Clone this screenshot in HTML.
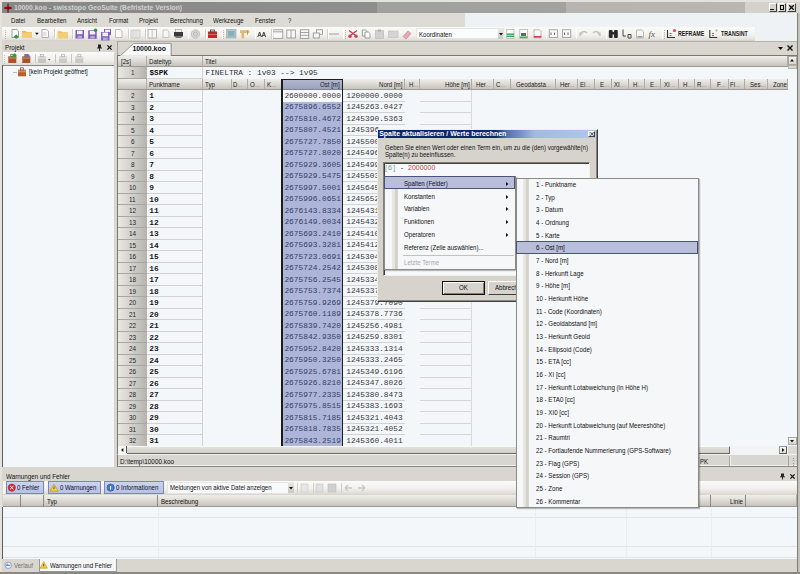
<!DOCTYPE html><html><head><meta charset="utf-8"><style>
html,body{margin:0;padding:0;}
body{width:800px;height:574px;position:relative;overflow:hidden;background:#d9d6d0;font-family:"Liberation Sans",sans-serif;}
div{position:absolute;box-sizing:border-box;}
svg{display:block;overflow:visible;}
.t{white-space:nowrap;line-height:0;transform-origin:0 0;}
.hdr{background:linear-gradient(#efeee9,#dedcd6 45%,#c6c4bd);border-right:1px solid #aeaca6;border-bottom:1px solid #9c9a93;}
.rh{background:linear-gradient(to right,#e9e7e2,#d6d4ce 40%,#c2c0ba 78%,#b4b2ac);border-bottom:1px solid #a8a6a0;}
</style></head><body>

<div style="left:0px;top:0px;width:800px;height:2px;background:#e4e2dd;"></div>
<div style="left:0px;top:0px;width:2px;height:574px;background:#e4e2dd;"></div>
<div style="left:2px;top:2px;width:795px;height:10.6px;background:linear-gradient(to right,#878787 0,#8e8e8e 375px,#a0a09e 375px,#a2a2a0 564px,#b5b4b1 564px,#b7b6b3 743px,#d4d2cc 743px);"></div>
<div style="left:2.5px;top:2.6px;width:10px;height:10px;"><svg width="10" height="10" viewBox="0 0 10 10"><path d="M0.6 5L5 2.6L9.4 5L5 7.4z" fill="#c84848"/><path d="M5 0.6V9.8" stroke="#5a0000" stroke-width="1"/><path d="M1.5 5H8.5" stroke="#7a0000" stroke-width="1.6"/></svg></div>
<div class="t" style="left:14px;top:7.5px;font-size:6.8px;color:#d2d2d2;font-weight:bold;">10000.koo - swisstopo GeoSuite (Befristete Version)</div>
<div style="left:768.5px;top:3.2px;width:8.6px;height:8.7px;background:#d8d5ce;border-top:1px solid #fff;border-left:1px solid #fff;border-right:1px solid #404040;border-bottom:1px solid #404040;"></div>
<div style="left:777.5px;top:3.2px;width:8.6px;height:8.7px;background:#d8d5ce;border-top:1px solid #fff;border-left:1px solid #fff;border-right:1px solid #404040;border-bottom:1px solid #404040;"></div>
<div style="left:787px;top:3.2px;width:8.6px;height:8.7px;background:#d8d5ce;border-top:1px solid #fff;border-left:1px solid #fff;border-right:1px solid #404040;border-bottom:1px solid #404040;"></div>
<div style="left:770.3px;top:8.6px;width:4.2px;height:1.4px;background:#111;"></div>
<div style="left:779.6px;top:5.2px;width:4.4px;height:4.4px;border:1px solid #111;border-top-width:1.6px;"></div>
<div style="left:789px;top:5px;width:5px;height:5px;"><svg width="5" height="5" viewBox="0 0 5 5"><path d="M0.3 0.3L4.7 4.7M4.7 0.3L0.3 4.7" stroke="#111" stroke-width="1.3"/></svg></div>
<div style="left:2px;top:12.6px;width:463px;height:14.0px;background:#dddbd5;"></div>
<div style="left:465px;top:12.6px;width:332px;height:28.0px;background:#eef2f5;"></div>
<div class="t" style="left:11.2px;top:21px;font-size:6.9px;color:#111;transform:scaleX(0.884);">Datei</div>
<div class="t" style="left:36.8px;top:21px;font-size:6.9px;color:#111;transform:scaleX(0.884);">Bearbeiten</div>
<div class="t" style="left:77.3px;top:21px;font-size:6.9px;color:#111;transform:scaleX(0.884);">Ansicht</div>
<div class="t" style="left:108.6px;top:21px;font-size:6.9px;color:#111;transform:scaleX(0.884);">Format</div>
<div class="t" style="left:139px;top:21px;font-size:6.9px;color:#111;transform:scaleX(0.884);">Projekt</div>
<div class="t" style="left:169.5px;top:21px;font-size:6.9px;color:#111;transform:scaleX(0.884);">Berechnung</div>
<div class="t" style="left:213.3px;top:21px;font-size:6.9px;color:#111;transform:scaleX(0.884);">Werkzeuge</div>
<div class="t" style="left:255px;top:21px;font-size:6.9px;color:#111;transform:scaleX(0.884);">Fenster</div>
<div class="t" style="left:287.5px;top:21px;font-size:6.9px;color:#111;transform:scaleX(0.884);">?</div>
<div style="left:2px;top:26.6px;width:752.6px;height:14.0px;background:linear-gradient(#fafaf8,#f3f2ee 55%,#e2e0d9 90%,#cfcdc6);"></div>
<div style="left:5.2px;top:29.5px;width:1.0px;height:1.0px;background:#b4b2ae;"></div>
<div style="left:5.2px;top:31.5px;width:1.0px;height:1.0px;background:#b4b2ae;"></div>
<div style="left:5.2px;top:33.5px;width:1.0px;height:1.0px;background:#b4b2ae;"></div>
<div style="left:5.2px;top:35.5px;width:1.0px;height:1.0px;background:#b4b2ae;"></div>
<div style="left:5.2px;top:37.5px;width:1.0px;height:1.0px;background:#b4b2ae;"></div>
<div style="left:0px;top:0px;width:800px;height:45px;"><svg width="800" height="45" viewBox="0 0 800 45"><path d="M12.0 29.5H16.8L18.5 31.2V37.5H12.0Z" fill="#fbfbfb" stroke="#8a8a8a" stroke-width="0.8"/><path d="M16.2 34.5l2.6 2.3-2.6 2.3-2.6-2.3z" fill="#2e9a3e"/><path d="M22.2 31H25.7L26.7 32H31.7V38H22.2Z" fill="#e9b95a"/><rect x="22.2" y="32.5" width="9.5" height="5.5" fill="#f3cd78"/><path d="M35 32.8h3.8l-1.9 2.2z" fill="#111"/><path d="M42.0 29.5H46.8L48.5 31.2V37.5H42.0Z" fill="#fcfcfc" stroke="#9a9aa8" stroke-width="0.8"/><path d="M43 33h3.6M43 35h3.6" stroke="#a0a0b0" stroke-width="0.6"/><path d="M57.8 31.2H61.3L62.3 32.2H67.8V38.2H57.8Z" fill="#e9b95a"/><rect x="57.8" y="32.7" width="10" height="5.5" fill="#f3cd78"/><rect x="75.5" y="30" width="8.5" height="8.5" fill="#7c5cb8"/><rect x="77.0" y="30.6" width="5.5" height="3.6" fill="#f4f0fa"/><rect x="77.5" y="35.6" width="4.5" height="2.6" fill="#b8a8d8"/><rect x="88.2" y="30.3" width="8.5" height="8.5" fill="#7c5cb8"/><rect x="89.7" y="30.900000000000002" width="5.5" height="3.6" fill="#f4f0fa"/><rect x="90.2" y="35.9" width="4.5" height="2.6" fill="#b8a8d8"/><circle cx="95.5" cy="30.2" r="1.8" fill="#2e9a3e"/><rect x="104" y="29" width="7" height="6" fill="#7c5cb8"/><rect x="105" y="29.6" width="5" height="2.4" fill="#f4f0fa"/><rect x="101" y="32" width="8.5" height="8.5" fill="#8466c0"/><rect x="102.5" y="32.6" width="5.5" height="3.6" fill="#f4f0fa"/><rect x="103" y="37.6" width="4.5" height="2.6" fill="#b8a8d8"/><path d="M115.5 29.5H120.3L122.0 31.2V37.5H115.5Z" fill="#fbfbfb" stroke="#b0b0b0" stroke-width="0.8"/><rect x="131" y="30" width="9" height="8" fill="#e6e6e6" stroke="#c0c0c0" stroke-width="0.7"/><path d="M133 30v8M136 30v8" stroke="#cfcfcf" stroke-width="0.6"/><rect x="148" y="29.5" width="8.5" height="8.5" fill="#f6f6f6" stroke="#a8a8a8" stroke-width="0.8"/><path d="M152.2 29.5v8.5" stroke="#b0b0b0" stroke-width="0.7"/><path d="M163.0 30.0H167.3L169.0 31.7V37.5H163.0Z" fill="#f6f6f6" stroke="#b8b8b8" stroke-width="0.8"/><rect x="175.5" y="29.3" width="6" height="3" fill="#f0f0f0" stroke="#888" stroke-width="0.5"/><rect x="174" y="32" width="9" height="4.5" fill="#3a3a3a"/><rect x="175.5" y="36" width="6" height="2" fill="#777"/><circle cx="195.5" cy="34" r="4.2" fill="#d8d8d8" stroke="#b8b8b8" stroke-width="0.8"/><circle cx="195.5" cy="34" r="2" fill="none" stroke="#aaa" stroke-width="0.8"/><rect x="208" y="31.5" width="9" height="6.5" fill="#c8242a"/><rect x="210.5" y="30" width="4" height="2" fill="none" stroke="#444" stroke-width="0.8"/><path d="M208 34.5h9" stroke="#f08080" stroke-width="0.7"/><rect x="226.5" y="29.5" width="9.5" height="8.5" fill="#b0c4cc" stroke="#98a8b0" stroke-width="0.6"/><rect x="228" y="31" width="6.5" height="5.5" fill="#8ab0b8"/><path d="M240 30.2h9.3v2.8h-5.2v5.3h-2.6v-5.3h-1.5z" fill="#e2b870"/><path d="M247.5 30.2v4.5" stroke="#c89848" stroke-width="1"/><path d="M257.8 37l1.8-5 1.8 5M258.5 35.3h2.2M262 37l1.8-5 1.8 5M262.7 35.3h2.2" stroke="#333" stroke-width="0.9" fill="none"/><rect x="272.8" y="29.8" width="10" height="8.5" fill="#f8f8f8" stroke="#909090" stroke-width="0.8"/><path d="M272.8 31.8h10" stroke="#909090" stroke-width="0.8"/><rect x="286.8" y="30" width="8.5" height="8" fill="#f8f8f8" stroke="#8c8c8c" stroke-width="0.8"/><path d="M291 30v8" stroke="#8c8c8c" stroke-width="0.8"/><rect x="300.3" y="29.8" width="8.5" height="8.5" fill="#f8f8f8" stroke="#8c8c8c" stroke-width="0.8"/><path d="M300.3 32.5h8.5M300.3 35.3h8.5" stroke="#8c8c8c" stroke-width="0.8"/><rect x="316.5" y="29.8" width="6" height="4.5" fill="#f8f8f8" stroke="#8c8c8c" stroke-width="0.8"/><rect x="313.3" y="33" width="6" height="5" fill="#f8f8f8" stroke="#8c8c8c" stroke-width="0.8"/><rect x="329" y="33" width="10" height="2" fill="#c8c8c8"/><path d="M349 30.5l8 6M357 30.5l-8 6" stroke="#c04050" stroke-width="1.3"/><circle cx="350" cy="36.3" r="1.8" fill="#d04858"/><circle cx="356" cy="36.3" r="1.8" fill="#d04858"/><path d="M362.3 30.0H365.6L367.3 31.7V36.0H362.3Z" fill="#fafafa" stroke="#8a8a8a" stroke-width="0.8"/><path d="M365.0 32.0H368.3L370.0 33.7V38.0H365.0Z" fill="#fafafa" stroke="#8a8a8a" stroke-width="0.8"/><rect x="375.5" y="30.5" width="8" height="8" fill="#d0d0d0" stroke="#b4b4b4" stroke-width="0.6"/><rect x="378" y="29.5" width="3" height="2" fill="#b0b0b0"/><rect x="388.5" y="31" width="9.5" height="6.5" fill="#d4d4d4" stroke="#bcbcbc" stroke-width="0.6"/><path d="M403 36.5l5-5.5 3 2.5-5 5.5z" fill="#e8a8b8" stroke="#c87890" stroke-width="0.6"/><rect x="506.8" y="29.3" width="7.2" height="9" fill="#fafafa" stroke="#a0a0a0" stroke-width="0.6"/><rect x="506.8" y="33.5" width="7.2" height="1.4" fill="#34a050"/><rect x="506.8" y="35.6" width="7.2" height="1.4" fill="#34a050"/><rect x="519.8" y="29.3" width="7.6" height="9" fill="#fafafa" stroke="#a0a0a0" stroke-width="0.6"/><rect x="521" y="33" width="5" height="3" fill="#507060"/><rect x="519.8" y="36.5" width="7.6" height="1.4" fill="#34a050"/><path d="M534.0 29.8H539.3L541.0 31.5V37.8H534.0Z" fill="#fafafa" stroke="#b0a0a0" stroke-width="0.8"/><rect x="533.8" y="36" width="7.5" height="1.6" fill="#d04050"/><rect x="549.2" y="29.8" width="8.2" height="7.5" fill="#fafafa" stroke="#888" stroke-width="0.7"/><path d="M551 32.5v2.5M554.5 32.5v2.5" stroke="#555" stroke-width="0.9"/><rect x="562.6" y="29.8" width="8.2" height="7.5" fill="#fafafa" stroke="#888" stroke-width="0.7"/><path d="M564.5 32.5v2.5M568 32.5v2.5" stroke="#555" stroke-width="0.9"/><path d="M580 36a4 4 0 0 1 7-3" stroke="#c4c4c4" stroke-width="1.6" fill="none"/><path d="M579 32.5l1.5 3 2.5-2z" fill="#c4c4c4"/><path d="M600 36a4 4 0 0 0 -7-3" stroke="#c4c4c4" stroke-width="1.6" fill="none"/><path d="M601 32.5l-1.5 3-2.5-2z" fill="#c4c4c4"/><rect x="608.8" y="30" width="3.8" height="8" rx="1" fill="#2a2a2a"/><rect x="614" y="30" width="3.8" height="8" rx="1" fill="#2a2a2a"/><rect x="611.5" y="32" width="3.5" height="2.5" fill="#2a2a2a"/><path d="M623 29.5v6.5h3M628 34.5h3v3.5h-3z" stroke="#333" stroke-width="0.9" fill="none"/><path d="M636.5 30.0H641.8L643.5 31.7V38.0H636.5Z" fill="#f6f6f6" stroke="#a8a8a8" stroke-width="0.8"/><rect x="637.5" y="36" width="5" height="1.5" fill="#9a9a9a"/><path d="M667.5 30v7.5h7.5" stroke="#333" stroke-width="1.1" fill="none"/><path d="M669.5 33.5h2M669.5 35.5h2" stroke="#333" stroke-width="0.7"/><circle cx="674.5" cy="30.5" r="1.6" fill="#d85060"/><path d="M709.8 30v7.5h7.5" stroke="#333" stroke-width="1.1" fill="none"/><path d="M712 33.5h2M712 35.5h2" stroke="#333" stroke-width="0.7"/><circle cx="716.5" cy="30.5" r="1" fill="#aaa"/></svg></div>
<div style="left:54.3px;top:28.5px;width:0.8px;height:10.3px;background:#d0cec8;"></div>
<div style="left:55.1px;top:28.5px;width:0.8px;height:10.3px;background:#ffffff;"></div>
<div style="left:72.2px;top:28.5px;width:0.8px;height:10.3px;background:#d0cec8;"></div>
<div style="left:73.0px;top:28.5px;width:0.8px;height:10.3px;background:#ffffff;"></div>
<div style="left:127.7px;top:28.5px;width:0.8px;height:10.3px;background:#d0cec8;"></div>
<div style="left:128.5px;top:28.5px;width:0.8px;height:10.3px;background:#ffffff;"></div>
<div style="left:144.8px;top:28.5px;width:0.8px;height:10.3px;background:#d0cec8;"></div>
<div style="left:145.6px;top:28.5px;width:0.8px;height:10.3px;background:#ffffff;"></div>
<div style="left:187.5px;top:28.5px;width:0.8px;height:10.3px;background:#d0cec8;"></div>
<div style="left:188.3px;top:28.5px;width:0.8px;height:10.3px;background:#ffffff;"></div>
<div style="left:205.2px;top:28.5px;width:0.8px;height:10.3px;background:#d0cec8;"></div>
<div style="left:206.0px;top:28.5px;width:0.8px;height:10.3px;background:#ffffff;"></div>
<div style="left:221.5px;top:28.5px;width:0.8px;height:10.3px;background:#d0cec8;"></div>
<div style="left:222.3px;top:28.5px;width:0.8px;height:10.3px;background:#ffffff;"></div>
<div style="left:254.5px;top:28.5px;width:0.8px;height:10.3px;background:#d0cec8;"></div>
<div style="left:255.3px;top:28.5px;width:0.8px;height:10.3px;background:#ffffff;"></div>
<div style="left:271px;top:28.5px;width:0.8px;height:10.3px;background:#d0cec8;"></div>
<div style="left:271.8px;top:28.5px;width:0.8px;height:10.3px;background:#ffffff;"></div>
<div style="left:327px;top:28.5px;width:0.8px;height:10.3px;background:#d0cec8;"></div>
<div style="left:327.8px;top:28.5px;width:0.8px;height:10.3px;background:#ffffff;"></div>
<div style="left:342.5px;top:28.5px;width:0.8px;height:10.3px;background:#d0cec8;"></div>
<div style="left:343.3px;top:28.5px;width:0.8px;height:10.3px;background:#ffffff;"></div>
<div style="left:415.5px;top:28.5px;width:0.8px;height:10.3px;background:#d0cec8;"></div>
<div style="left:416.3px;top:28.5px;width:0.8px;height:10.3px;background:#ffffff;"></div>
<div style="left:545.5px;top:28.5px;width:0.8px;height:10.3px;background:#d0cec8;"></div>
<div style="left:546.3px;top:28.5px;width:0.8px;height:10.3px;background:#ffffff;"></div>
<div style="left:575.5px;top:28.5px;width:0.8px;height:10.3px;background:#d0cec8;"></div>
<div style="left:576.3px;top:28.5px;width:0.8px;height:10.3px;background:#ffffff;"></div>
<div style="left:605.5px;top:28.5px;width:0.8px;height:10.3px;background:#d0cec8;"></div>
<div style="left:606.3px;top:28.5px;width:0.8px;height:10.3px;background:#ffffff;"></div>
<div style="left:661.5px;top:28.5px;width:0.8px;height:10.3px;background:#d0cec8;"></div>
<div style="left:662.3px;top:28.5px;width:0.8px;height:10.3px;background:#ffffff;"></div>
<div style="left:344.5px;top:29.5px;width:1.0px;height:1.0px;background:#b4b2ae;"></div>
<div style="left:344.5px;top:31.5px;width:1.0px;height:1.0px;background:#b4b2ae;"></div>
<div style="left:344.5px;top:33.5px;width:1.0px;height:1.0px;background:#b4b2ae;"></div>
<div style="left:344.5px;top:35.5px;width:1.0px;height:1.0px;background:#b4b2ae;"></div>
<div style="left:344.5px;top:37.5px;width:1.0px;height:1.0px;background:#b4b2ae;"></div>
<div style="left:663.5px;top:29.5px;width:1.0px;height:1.0px;background:#b4b2ae;"></div>
<div style="left:663.5px;top:31.5px;width:1.0px;height:1.0px;background:#b4b2ae;"></div>
<div style="left:663.5px;top:33.5px;width:1.0px;height:1.0px;background:#b4b2ae;"></div>
<div style="left:663.5px;top:35.5px;width:1.0px;height:1.0px;background:#b4b2ae;"></div>
<div style="left:663.5px;top:37.5px;width:1.0px;height:1.0px;background:#b4b2ae;"></div>
<div style="left:223px;top:29.5px;width:1px;height:1.0px;background:#b4b2ae;"></div>
<div style="left:223px;top:31.5px;width:1px;height:1.0px;background:#b4b2ae;"></div>
<div style="left:223px;top:33.5px;width:1px;height:1.0px;background:#b4b2ae;"></div>
<div style="left:223px;top:35.5px;width:1px;height:1.0px;background:#b4b2ae;"></div>
<div style="left:223px;top:37.5px;width:1px;height:1.0px;background:#b4b2ae;"></div>
<div class="t" style="left:648.6px;top:34.2px;font-size:9px;color:#555;font-style:italic;font-family:'Liberation Serif',serif;">fx</div>
<div class="t" style="left:678px;top:34px;font-size:6.4px;color:#222;transform:scaleX(0.83);font-weight:600;">REFRAME</div>
<div class="t" style="left:720.5px;top:34px;font-size:6.4px;color:#222;transform:scaleX(0.83);font-weight:600;">TRANSINT</div>
<div style="left:416px;top:28.2px;width:87.6px;height:11.1px;background:#fbfcfd;border:1px solid #e4e4e0;"></div>
<div style="left:497.5px;top:28.6px;width:5.7px;height:10.4px;background:linear-gradient(#eaeae6,#c8c6c0);"></div>
<div style="left:498.5px;top:32.8px;width:4px;height:3px;"><svg width="4" height="3" viewBox="0 0 4 3"><path d="M0 0h4l-2 2.5z" fill="#111"/></svg></div>
<div class="t" style="left:418.5px;top:34.6px;font-size:6.9px;color:#111;transform:scaleX(0.884);">Koordinaten</div>
<div style="left:2px;top:40.6px;width:112.5px;height:11.7px;background:#d9d6d0;"></div>
<div class="t" style="left:5px;top:47.6px;font-size:7.1px;color:#111;transform:scaleX(0.884);">Projekt</div>
<div style="left:97px;top:44.3px;width:5px;height:7px;"><svg width="5" height="7" viewBox="0 0 5 7"><path d="M1 0.5h3v3.5h-3z" fill="#222"/><path d="M0 4h5M2.5 4v3" stroke="#222" stroke-width="0.9"/></svg></div>
<div style="left:106.6px;top:44.5px;width:5px;height:5px;"><svg width="5" height="5" viewBox="0 0 5 5"><path d="M0.4 0.4L4.6 4.6M4.6 0.4L0.4 4.6" stroke="#111" stroke-width="1.3"/></svg></div>
<div style="left:3px;top:52.3px;width:110.8px;height:12.5px;background:linear-gradient(#fbfbf9,#f1f0ec 60%,#dedcd5);"></div>
<div style="left:3.8px;top:54.5px;width:1.0px;height:1.0px;background:#c4c2be;"></div>
<div style="left:3.8px;top:56.5px;width:1.0px;height:1.0px;background:#c4c2be;"></div>
<div style="left:3.8px;top:58.5px;width:1.0px;height:1.0px;background:#c4c2be;"></div>
<div style="left:3.8px;top:60.5px;width:1.0px;height:1.0px;background:#c4c2be;"></div>
<div style="left:3.8px;top:62.5px;width:1.0px;height:1.0px;background:#c4c2be;"></div>
<div style="left:0px;top:0px;width:120px;height:80px;"><svg width="120" height="80" viewBox="0 0 120 80"><rect x="8.3" y="56.5" width="8" height="6.5" fill="#a8542a"/><rect x="8.3" y="56.5" width="8" height="2.5" fill="#c47448"/><rect x="10.8" y="54.5" width="3" height="2.2" fill="none" stroke="#7a4a30" stroke-width="0.7"/><circle cx="14.5" cy="55.5" r="2" fill="#30a040"/><rect x="22.3" y="56.5" width="8" height="6.5" fill="#a8542a"/><rect x="22.3" y="56.5" width="8" height="2.5" fill="#c47448"/><rect x="24.8" y="54.5" width="3" height="2.2" fill="none" stroke="#7a4a30" stroke-width="0.7"/><rect x="25" y="54.5" width="4.5" height="3" fill="#7868b0"/><rect x="38" y="56.5" width="8" height="6.5" fill="#c4c4c4"/><rect x="38" y="56.5" width="8" height="2.5" fill="#d8d8d8"/><rect x="40.5" y="54.5" width="3" height="2.2" fill="none" stroke="#b0b0b0" stroke-width="0.7"/><path d="M48 59h2.5l-1.25 1.4z" fill="#555"/><rect x="59" y="56.5" width="8" height="6.5" fill="#cacaca"/><rect x="59" y="56.5" width="8" height="2.5" fill="#dcdcdc"/><rect x="61.5" y="54.5" width="3" height="2.2" fill="none" stroke="#b4b4b4" stroke-width="0.7"/><rect x="75.3" y="56.5" width="8" height="6.5" fill="#c8c8c8"/><rect x="75.3" y="56.5" width="8" height="2.5" fill="#dadada"/><rect x="77.8" y="54.5" width="3" height="2.2" fill="none" stroke="#b4b4b4" stroke-width="0.7"/></svg></div>
<div style="left:34.5px;top:53.8px;width:0.8px;height:9.7px;background:#c8c6c0;"></div>
<div style="left:54.8px;top:53.8px;width:0.8px;height:9.7px;background:#c8c6c0;"></div>
<div style="left:71.3px;top:53.8px;width:0.8px;height:9.7px;background:#c8c6c0;"></div>
<div style="left:2px;top:64.8px;width:1px;height:402.2px;background:#5e5c58;"></div>
<div style="left:3px;top:64.8px;width:111.3px;height:402.2px;background:#f3f7fa;border-top:1px solid #8a8884;"></div>
<div style="left:12.5px;top:71.8px;width:4.1px;height:0.8px;background:#b8b8b8;"></div>
<div style="left:0px;top:0px;width:120px;height:80px;"><svg width="120" height="80" viewBox="0 0 120 80"><rect x="18" y="69.8" width="8" height="6.5" fill="#b8602e"/><rect x="18" y="69.8" width="8" height="2.5" fill="#d88a58"/><rect x="20.5" y="67.8" width="3" height="2.2" fill="none" stroke="#7a4a30" stroke-width="0.7"/></svg></div>
<div class="t" style="left:28.8px;top:72.4px;font-size:6.9px;color:#111;transform:scaleX(0.884);">[kein Projekt geöffnet]</div>
<div style="left:114.3px;top:40.6px;width:2.9px;height:426.4px;background:#d9d6d0;"></div>
<div style="left:117.2px;top:40.6px;width:680.0px;height:14.6px;background:#d9d6d0;"></div>
<div style="left:117.2px;top:40.9px;width:680.0px;height:1.0px;background:#b4b2ac;"></div>
<div style="left:117.2px;top:40.9px;width:1.0px;height:14.1px;background:#a4a29c;"></div>
<div style="left:117.2px;top:55px;width:1.0px;height:412px;background:#7a7873;"></div>
<div style="left:118.2px;top:54.6px;width:2.3px;height:1.0px;background:#6a6864;"></div>
<div style="left:170.6px;top:54.6px;width:626.6px;height:1.0px;background:#7a7873;"></div>
<div style="left:119.6px;top:43px;width:53px;height:12.6px;"><svg width="53" height="12.6" viewBox="0 0 53 12.6"><path d="M0.4 12.6L13.8 0.4H51.1V12.6" fill="#f7f8fa" stroke="#8a8882" stroke-width="0.8"/></svg></div>
<div class="t" style="left:132.4px;top:49.3px;font-size:6.95px;color:#111;font-weight:bold;">10000.koo</div>
<div style="left:171.2px;top:43.6px;width:0.8px;height:11.4px;background:#a8a6a0;"></div>
<div style="left:777.5px;top:46.8px;width:5px;height:3.2px;"><svg width="5" height="3.2" viewBox="0 0 5 3.2"><path d="M0 0h5l-2.5 3z" fill="#111"/></svg></div>
<div style="left:786.8px;top:45.2px;width:6px;height:6px;"><svg width="6" height="6" viewBox="0 0 6 6"><path d="M0.5 0.5L5.5 5.5M5.5 0.5L0.5 5.5" stroke="#111" stroke-width="1.4"/></svg></div>
<div style="left:118.2px;top:55.9px;width:669.6px;height:390.8px;background:#f3f7fa;"></div>
<div class="hdr" style="left:118.2px;top:55.8px;width:28.4px;height:11.5px;"></div>
<div class="hdr" style="left:146.6px;top:55.8px;width:56.4px;height:11.5px;"></div>
<div class="hdr" style="left:203px;top:55.8px;width:584.8px;height:11.5px;"></div>
<div class="t" style="left:120.6px;top:61.8px;font-size:6.9px;color:#202020;transform:scaleX(0.884);">[2s]</div>
<div class="t" style="left:148.8px;top:61.8px;font-size:6.9px;color:#202020;transform:scaleX(0.884);">Dateityp</div>
<div class="t" style="left:204.8px;top:61.8px;font-size:6.9px;color:#202020;transform:scaleX(0.884);">Titel</div>
<div class="rh" style="left:118.2px;top:67.3px;width:28.4px;height:11.5px;"></div>
<div class="t" style="left:130.61px;top:73.3px;font-size:7.8px;color:#333;transform:scaleX(0.8);">1</div>
<div style="left:146.6px;top:67.3px;width:56.4px;height:11.5px;border-right:1px solid #d2d2d2;border-bottom:1px solid #d2d2d2;"></div>
<div class="t" style="left:149.5px;top:73.4px;font-size:7.7px;color:#111;font-weight:bold;font-family:'Liberation Mono',monospace;">$SPK</div>
<div class="t" style="left:205.5px;top:73.1px;font-size:7.8px;color:#333;font-family:'Liberation Mono',monospace;">FINELTRA : 1v03 --&gt; 1v95</div>
<div class="hdr" style="left:118.2px;top:78.8px;width:28.4px;height:11.5px;"></div>
<div class="hdr" style="left:146.6px;top:78.8px;width:56.4px;height:11.5px;"></div>
<div class="t" style="left:148.8px;top:84.8px;font-size:6.9px;color:#202020;transform:scaleX(0.884);">Punktname</div>
<div class="hdr" style="left:203px;top:78.8px;width:29px;height:11.5px;"></div>
<div class="t" style="left:205px;top:84.8px;font-size:6.9px;color:#202020;transform:scaleX(0.884);">Typ</div>
<div class="hdr" style="left:232px;top:78.8px;width:16px;height:11.5px;"></div>
<div class="t" style="left:233px;top:84.8px;font-size:6.9px;color:#202020;transform:scaleX(0.884);">D<span style="color:#8a8a8a">...</span></div>
<div class="hdr" style="left:248px;top:78.8px;width:16.5px;height:11.5px;"></div>
<div class="t" style="left:250px;top:84.8px;font-size:6.9px;color:#202020;transform:scaleX(0.884);">O<span style="color:#8a8a8a">...</span></div>
<div class="hdr" style="left:264.5px;top:78.8px;width:17.0px;height:11.5px;"></div>
<div class="t" style="left:267px;top:84.8px;font-size:6.9px;color:#202020;transform:scaleX(0.884);">K<span style="color:#8a8a8a">...</span></div>
<div style="left:281.5px;top:78.8px;width:61.0px;height:11.5px;background:linear-gradient(#b4bacf,#9aa2bd);border-bottom:1px solid #7c84a0;"></div>
<div class="t" style="left:320.25px;top:84.8px;font-size:6.9px;color:#202020;transform:scaleX(0.884);">Ost [m]</div>
<div class="hdr" style="left:342.5px;top:78.8px;width:62.5px;height:11.5px;"></div>
<div class="t" style="left:379.01px;top:84.8px;font-size:6.9px;color:#202020;transform:scaleX(0.884);">Nord [m]</div>
<div class="hdr" style="left:405px;top:78.8px;width:15px;height:11.5px;"></div>
<div class="t" style="left:408.5px;top:84.8px;font-size:6.9px;color:#202020;transform:scaleX(0.884);">H<span style="color:#8a8a8a">...</span></div>
<div class="hdr" style="left:420px;top:78.8px;width:52px;height:11.5px;"></div>
<div class="t" style="left:444.65px;top:84.8px;font-size:6.9px;color:#202020;transform:scaleX(0.884);">Höhe [m]</div>
<div class="hdr" style="left:472px;top:78.8px;width:22px;height:11.5px;"></div>
<div class="t" style="left:476px;top:84.8px;font-size:6.9px;color:#202020;transform:scaleX(0.884);">Her<span style="color:#8a8a8a">...</span></div>
<div class="hdr" style="left:494px;top:78.8px;width:17px;height:11.5px;"></div>
<div class="t" style="left:496px;top:84.8px;font-size:6.9px;color:#202020;transform:scaleX(0.884);">C<span style="color:#8a8a8a">...</span></div>
<div class="hdr" style="left:511px;top:78.8px;width:45px;height:11.5px;"></div>
<div class="t" style="left:516px;top:84.8px;font-size:6.9px;color:#202020;transform:scaleX(0.884);">Geodabsta<span style="color:#8a8a8a">...</span></div>
<div class="hdr" style="left:556px;top:78.8px;width:22px;height:11.5px;"></div>
<div class="t" style="left:560px;top:84.8px;font-size:6.9px;color:#202020;transform:scaleX(0.884);">Her<span style="color:#8a8a8a">...</span></div>
<div class="hdr" style="left:578px;top:78.8px;width:17px;height:11.5px;"></div>
<div class="t" style="left:580px;top:84.8px;font-size:6.9px;color:#202020;transform:scaleX(0.884);">El<span style="color:#8a8a8a">...</span></div>
<div class="hdr" style="left:595px;top:78.8px;width:17px;height:11.5px;"></div>
<div class="t" style="left:599.5px;top:84.8px;font-size:6.9px;color:#202020;transform:scaleX(0.884);">E<span style="color:#8a8a8a">...</span></div>
<div class="hdr" style="left:612px;top:78.8px;width:17px;height:11.5px;"></div>
<div class="t" style="left:613.8px;top:84.8px;font-size:6.9px;color:#202020;transform:scaleX(0.884);">XI<span style="color:#8a8a8a">...</span></div>
<div class="hdr" style="left:629px;top:78.8px;width:16px;height:11.5px;"></div>
<div class="t" style="left:632.5px;top:84.8px;font-size:6.9px;color:#202020;transform:scaleX(0.884);">H<span style="color:#8a8a8a">...</span></div>
<div class="hdr" style="left:645px;top:78.8px;width:16px;height:11.5px;"></div>
<div class="t" style="left:650px;top:84.8px;font-size:6.9px;color:#202020;transform:scaleX(0.884);">E<span style="color:#8a8a8a">...</span></div>
<div class="hdr" style="left:661px;top:78.8px;width:18px;height:11.5px;"></div>
<div class="t" style="left:663.6px;top:84.8px;font-size:6.9px;color:#202020;transform:scaleX(0.884);">XI<span style="color:#8a8a8a">...</span></div>
<div class="hdr" style="left:679px;top:78.8px;width:16px;height:11.5px;"></div>
<div class="t" style="left:682.5px;top:84.8px;font-size:6.9px;color:#202020;transform:scaleX(0.884);">H<span style="color:#8a8a8a">...</span></div>
<div class="hdr" style="left:695px;top:78.8px;width:16px;height:11.5px;"></div>
<div class="t" style="left:697px;top:84.8px;font-size:6.9px;color:#202020;transform:scaleX(0.884);">R<span style="color:#8a8a8a">...</span></div>
<div class="hdr" style="left:711px;top:78.8px;width:18px;height:11.5px;"></div>
<div class="t" style="left:717px;top:84.8px;font-size:6.9px;color:#202020;transform:scaleX(0.884);">F<span style="color:#8a8a8a">...</span></div>
<div class="hdr" style="left:729px;top:78.8px;width:16px;height:11.5px;"></div>
<div class="t" style="left:730px;top:84.8px;font-size:6.9px;color:#202020;transform:scaleX(0.884);">Fl<span style="color:#8a8a8a">...</span></div>
<div class="hdr" style="left:745px;top:78.8px;width:22.5px;height:11.5px;"></div>
<div class="t" style="left:749.5px;top:84.8px;font-size:6.9px;color:#202020;transform:scaleX(0.884);">Ses<span style="color:#8a8a8a">...</span></div>
<div class="hdr" style="left:767.5px;top:78.8px;width:20.3px;height:11.5px;"></div>
<div class="t" style="left:772.5px;top:84.8px;font-size:6.9px;color:#202020;transform:scaleX(0.884);">Zone</div>
<div class="rh" style="left:118.2px;top:90.3px;width:28.4px;height:11.5px;"></div>
<div class="t" style="left:130.57px;top:96.3px;font-size:7.8px;color:#262626;transform:scaleX(0.82);">2</div>
<div style="left:146.6px;top:90.3px;width:56.4px;height:11.5px;border-right:1px solid #d2d2d2;border-bottom:1px solid #d2d2d2;"></div>
<div class="t" style="left:149.2px;top:96.1px;font-size:7.9px;color:#1a1a1a;font-weight:bold;font-family:'Liberation Mono',monospace;">1</div>
<div style="left:281.5px;top:90.3px;width:61.0px;height:11.5px;background:#f7f9fb;"></div>
<div class="t" style="left:284.4px;top:95.9px;font-size:7.85px;color:#3a3a3a;font-family:'Liberation Mono',monospace;">2600000.0000</div>
<div style="left:342.5px;top:90.3px;width:62.5px;height:11.5px;border-bottom:1px solid #d2d2d2;"></div>
<div class="t" style="left:346.2px;top:95.9px;font-size:7.85px;color:#3a3a3a;font-family:'Liberation Mono',monospace;">1200000.0000</div>
<div style="left:420px;top:90.3px;width:52px;height:11.5px;border-right:1px solid #d8d8d8;border-bottom:1px solid #d6d6d6;"></div>
<div class="rh" style="left:118.2px;top:101.8px;width:28.4px;height:11.5px;"></div>
<div class="t" style="left:130.57px;top:107.8px;font-size:7.8px;color:#262626;transform:scaleX(0.82);">3</div>
<div style="left:146.6px;top:101.8px;width:56.4px;height:11.5px;border-right:1px solid #d2d2d2;border-bottom:1px solid #d2d2d2;"></div>
<div class="t" style="left:149.2px;top:107.6px;font-size:7.9px;color:#1a1a1a;font-weight:bold;font-family:'Liberation Mono',monospace;">2</div>
<div style="left:281.5px;top:101.8px;width:61.0px;height:11.5px;background:#adb6d8;"></div>
<div class="t" style="left:284.4px;top:107.4px;font-size:7.85px;color:#384068;font-family:'Liberation Mono',monospace;">2675896.6552</div>
<div style="left:342.5px;top:101.8px;width:62.5px;height:11.5px;border-bottom:1px solid #d2d2d2;"></div>
<div class="t" style="left:346.2px;top:107.4px;font-size:7.85px;color:#3a3a3a;font-family:'Liberation Mono',monospace;">1245263.0427</div>
<div style="left:420px;top:101.8px;width:52px;height:11.5px;border-right:1px solid #d8d8d8;border-bottom:1px solid #d6d6d6;"></div>
<div class="rh" style="left:118.2px;top:113.3px;width:28.4px;height:11.5px;"></div>
<div class="t" style="left:130.57px;top:119.3px;font-size:7.8px;color:#262626;transform:scaleX(0.82);">4</div>
<div style="left:146.6px;top:113.3px;width:56.4px;height:11.5px;border-right:1px solid #d2d2d2;border-bottom:1px solid #d2d2d2;"></div>
<div class="t" style="left:149.2px;top:119.1px;font-size:7.9px;color:#1a1a1a;font-weight:bold;font-family:'Liberation Mono',monospace;">3</div>
<div style="left:281.5px;top:113.3px;width:61.0px;height:11.5px;background:#adb6d8;"></div>
<div class="t" style="left:284.4px;top:118.9px;font-size:7.85px;color:#384068;font-family:'Liberation Mono',monospace;">2675810.4672</div>
<div style="left:342.5px;top:113.3px;width:62.5px;height:11.5px;border-bottom:1px solid #d2d2d2;"></div>
<div class="t" style="left:346.2px;top:118.9px;font-size:7.85px;color:#3a3a3a;font-family:'Liberation Mono',monospace;">1245390.5363</div>
<div style="left:420px;top:113.3px;width:52px;height:11.5px;border-right:1px solid #d8d8d8;border-bottom:1px solid #d6d6d6;"></div>
<div class="rh" style="left:118.2px;top:124.8px;width:28.4px;height:11.5px;"></div>
<div class="t" style="left:130.57px;top:130.8px;font-size:7.8px;color:#262626;transform:scaleX(0.82);">5</div>
<div style="left:146.6px;top:124.8px;width:56.4px;height:11.5px;border-right:1px solid #d2d2d2;border-bottom:1px solid #d2d2d2;"></div>
<div class="t" style="left:149.2px;top:130.6px;font-size:7.9px;color:#1a1a1a;font-weight:bold;font-family:'Liberation Mono',monospace;">4</div>
<div style="left:281.5px;top:124.8px;width:61.0px;height:11.5px;background:#adb6d8;"></div>
<div class="t" style="left:284.4px;top:130.4px;font-size:7.85px;color:#384068;font-family:'Liberation Mono',monospace;">2675807.4521</div>
<div style="left:342.5px;top:124.8px;width:62.5px;height:11.5px;border-bottom:1px solid #d2d2d2;"></div>
<div class="t" style="left:346.2px;top:130.4px;font-size:7.85px;color:#3a3a3a;font-family:'Liberation Mono',monospace;">1245396</div>
<div style="left:420px;top:124.8px;width:52px;height:11.5px;border-right:1px solid #d8d8d8;border-bottom:1px solid #d6d6d6;"></div>
<div class="rh" style="left:118.2px;top:136.3px;width:28.4px;height:11.5px;"></div>
<div class="t" style="left:130.57px;top:142.3px;font-size:7.8px;color:#262626;transform:scaleX(0.82);">6</div>
<div style="left:146.6px;top:136.3px;width:56.4px;height:11.5px;border-right:1px solid #d2d2d2;border-bottom:1px solid #d2d2d2;"></div>
<div class="t" style="left:149.2px;top:142.1px;font-size:7.9px;color:#1a1a1a;font-weight:bold;font-family:'Liberation Mono',monospace;">5</div>
<div style="left:281.5px;top:136.3px;width:61.0px;height:11.5px;background:#adb6d8;"></div>
<div class="t" style="left:284.4px;top:141.9px;font-size:7.85px;color:#384068;font-family:'Liberation Mono',monospace;">2675727.7850</div>
<div style="left:342.5px;top:136.3px;width:62.5px;height:11.5px;border-bottom:1px solid #d2d2d2;"></div>
<div class="t" style="left:346.2px;top:141.9px;font-size:7.85px;color:#3a3a3a;font-family:'Liberation Mono',monospace;">1245500</div>
<div style="left:420px;top:136.3px;width:52px;height:11.5px;border-right:1px solid #d8d8d8;border-bottom:1px solid #d6d6d6;"></div>
<div class="rh" style="left:118.2px;top:147.8px;width:28.4px;height:11.5px;"></div>
<div class="t" style="left:130.57px;top:153.8px;font-size:7.8px;color:#262626;transform:scaleX(0.82);">7</div>
<div style="left:146.6px;top:147.8px;width:56.4px;height:11.5px;border-right:1px solid #d2d2d2;border-bottom:1px solid #d2d2d2;"></div>
<div class="t" style="left:149.2px;top:153.6px;font-size:7.9px;color:#1a1a1a;font-weight:bold;font-family:'Liberation Mono',monospace;">6</div>
<div style="left:281.5px;top:147.8px;width:61.0px;height:11.5px;background:#adb6d8;"></div>
<div class="t" style="left:284.4px;top:153.4px;font-size:7.85px;color:#384068;font-family:'Liberation Mono',monospace;">2675727.8020</div>
<div style="left:342.5px;top:147.8px;width:62.5px;height:11.5px;border-bottom:1px solid #d2d2d2;"></div>
<div class="t" style="left:346.2px;top:153.4px;font-size:7.85px;color:#3a3a3a;font-family:'Liberation Mono',monospace;">1245496</div>
<div style="left:420px;top:147.8px;width:52px;height:11.5px;border-right:1px solid #d8d8d8;border-bottom:1px solid #d6d6d6;"></div>
<div class="rh" style="left:118.2px;top:159.3px;width:28.4px;height:11.5px;"></div>
<div class="t" style="left:130.57px;top:165.3px;font-size:7.8px;color:#262626;transform:scaleX(0.82);">8</div>
<div style="left:146.6px;top:159.3px;width:56.4px;height:11.5px;border-right:1px solid #d2d2d2;border-bottom:1px solid #d2d2d2;"></div>
<div class="t" style="left:149.2px;top:165.1px;font-size:7.9px;color:#1a1a1a;font-weight:bold;font-family:'Liberation Mono',monospace;">7</div>
<div style="left:281.5px;top:159.3px;width:61.0px;height:11.5px;background:#adb6d8;"></div>
<div class="t" style="left:284.4px;top:164.9px;font-size:7.85px;color:#384068;font-family:'Liberation Mono',monospace;">2675929.3605</div>
<div style="left:342.5px;top:159.3px;width:62.5px;height:11.5px;border-bottom:1px solid #d2d2d2;"></div>
<div class="t" style="left:346.2px;top:164.9px;font-size:7.85px;color:#3a3a3a;font-family:'Liberation Mono',monospace;">1245499</div>
<div style="left:420px;top:159.3px;width:52px;height:11.5px;border-right:1px solid #d8d8d8;border-bottom:1px solid #d6d6d6;"></div>
<div class="rh" style="left:118.2px;top:170.8px;width:28.4px;height:11.5px;"></div>
<div class="t" style="left:130.57px;top:176.8px;font-size:7.8px;color:#262626;transform:scaleX(0.82);">9</div>
<div style="left:146.6px;top:170.8px;width:56.4px;height:11.5px;border-right:1px solid #d2d2d2;border-bottom:1px solid #d2d2d2;"></div>
<div class="t" style="left:149.2px;top:176.6px;font-size:7.9px;color:#1a1a1a;font-weight:bold;font-family:'Liberation Mono',monospace;">8</div>
<div style="left:281.5px;top:170.8px;width:61.0px;height:11.5px;background:#adb6d8;"></div>
<div class="t" style="left:284.4px;top:176.4px;font-size:7.85px;color:#384068;font-family:'Liberation Mono',monospace;">2675929.5475</div>
<div style="left:342.5px;top:170.8px;width:62.5px;height:11.5px;border-bottom:1px solid #d2d2d2;"></div>
<div class="t" style="left:346.2px;top:176.4px;font-size:7.85px;color:#3a3a3a;font-family:'Liberation Mono',monospace;">1245503</div>
<div style="left:420px;top:170.8px;width:52px;height:11.5px;border-right:1px solid #d8d8d8;border-bottom:1px solid #d6d6d6;"></div>
<div class="rh" style="left:118.2px;top:182.3px;width:28.4px;height:11.5px;"></div>
<div class="t" style="left:128.79px;top:188.3px;font-size:7.8px;color:#262626;transform:scaleX(0.82);">10</div>
<div style="left:146.6px;top:182.3px;width:56.4px;height:11.5px;border-right:1px solid #d2d2d2;border-bottom:1px solid #d2d2d2;"></div>
<div class="t" style="left:149.2px;top:188.1px;font-size:7.9px;color:#1a1a1a;font-weight:bold;font-family:'Liberation Mono',monospace;">9</div>
<div style="left:281.5px;top:182.3px;width:61.0px;height:11.5px;background:#adb6d8;"></div>
<div class="t" style="left:284.4px;top:187.9px;font-size:7.85px;color:#384068;font-family:'Liberation Mono',monospace;">2675997.5001</div>
<div style="left:342.5px;top:182.3px;width:62.5px;height:11.5px;border-bottom:1px solid #d2d2d2;"></div>
<div class="t" style="left:346.2px;top:187.9px;font-size:7.85px;color:#3a3a3a;font-family:'Liberation Mono',monospace;">1245645</div>
<div style="left:420px;top:182.3px;width:52px;height:11.5px;border-right:1px solid #d8d8d8;border-bottom:1px solid #d6d6d6;"></div>
<div class="rh" style="left:118.2px;top:193.8px;width:28.4px;height:11.5px;"></div>
<div class="t" style="left:129.03px;top:199.8px;font-size:7.8px;color:#262626;transform:scaleX(0.82);">11</div>
<div style="left:146.6px;top:193.8px;width:56.4px;height:11.5px;border-right:1px solid #d2d2d2;border-bottom:1px solid #d2d2d2;"></div>
<div class="t" style="left:149.2px;top:199.6px;font-size:7.9px;color:#1a1a1a;font-weight:bold;font-family:'Liberation Mono',monospace;">10</div>
<div style="left:281.5px;top:193.8px;width:61.0px;height:11.5px;background:#adb6d8;"></div>
<div class="t" style="left:284.4px;top:199.4px;font-size:7.85px;color:#384068;font-family:'Liberation Mono',monospace;">2675996.0651</div>
<div style="left:342.5px;top:193.8px;width:62.5px;height:11.5px;border-bottom:1px solid #d2d2d2;"></div>
<div class="t" style="left:346.2px;top:199.4px;font-size:7.85px;color:#3a3a3a;font-family:'Liberation Mono',monospace;">1245652</div>
<div style="left:420px;top:193.8px;width:52px;height:11.5px;border-right:1px solid #d8d8d8;border-bottom:1px solid #d6d6d6;"></div>
<div class="rh" style="left:118.2px;top:205.3px;width:28.4px;height:11.5px;"></div>
<div class="t" style="left:128.79px;top:211.3px;font-size:7.8px;color:#262626;transform:scaleX(0.82);">12</div>
<div style="left:146.6px;top:205.3px;width:56.4px;height:11.5px;border-right:1px solid #d2d2d2;border-bottom:1px solid #d2d2d2;"></div>
<div class="t" style="left:149.2px;top:211.1px;font-size:7.9px;color:#1a1a1a;font-weight:bold;font-family:'Liberation Mono',monospace;">11</div>
<div style="left:281.5px;top:205.3px;width:61.0px;height:11.5px;background:#adb6d8;"></div>
<div class="t" style="left:284.4px;top:210.9px;font-size:7.85px;color:#384068;font-family:'Liberation Mono',monospace;">2676143.8334</div>
<div style="left:342.5px;top:205.3px;width:62.5px;height:11.5px;border-bottom:1px solid #d2d2d2;"></div>
<div class="t" style="left:346.2px;top:210.9px;font-size:7.85px;color:#3a3a3a;font-family:'Liberation Mono',monospace;">1245431</div>
<div style="left:420px;top:205.3px;width:52px;height:11.5px;border-right:1px solid #d8d8d8;border-bottom:1px solid #d6d6d6;"></div>
<div class="rh" style="left:118.2px;top:216.8px;width:28.4px;height:11.5px;"></div>
<div class="t" style="left:128.79px;top:222.8px;font-size:7.8px;color:#262626;transform:scaleX(0.82);">13</div>
<div style="left:146.6px;top:216.8px;width:56.4px;height:11.5px;border-right:1px solid #d2d2d2;border-bottom:1px solid #d2d2d2;"></div>
<div class="t" style="left:149.2px;top:222.6px;font-size:7.9px;color:#1a1a1a;font-weight:bold;font-family:'Liberation Mono',monospace;">12</div>
<div style="left:281.5px;top:216.8px;width:61.0px;height:11.5px;background:#adb6d8;"></div>
<div class="t" style="left:284.4px;top:222.4px;font-size:7.85px;color:#384068;font-family:'Liberation Mono',monospace;">2676149.0034</div>
<div style="left:342.5px;top:216.8px;width:62.5px;height:11.5px;border-bottom:1px solid #d2d2d2;"></div>
<div class="t" style="left:346.2px;top:222.4px;font-size:7.85px;color:#3a3a3a;font-family:'Liberation Mono',monospace;">1245432</div>
<div style="left:420px;top:216.8px;width:52px;height:11.5px;border-right:1px solid #d8d8d8;border-bottom:1px solid #d6d6d6;"></div>
<div class="rh" style="left:118.2px;top:228.3px;width:28.4px;height:11.5px;"></div>
<div class="t" style="left:128.79px;top:234.3px;font-size:7.8px;color:#262626;transform:scaleX(0.82);">14</div>
<div style="left:146.6px;top:228.3px;width:56.4px;height:11.5px;border-right:1px solid #d2d2d2;border-bottom:1px solid #d2d2d2;"></div>
<div class="t" style="left:149.2px;top:234.1px;font-size:7.9px;color:#1a1a1a;font-weight:bold;font-family:'Liberation Mono',monospace;">13</div>
<div style="left:281.5px;top:228.3px;width:61.0px;height:11.5px;background:#adb6d8;"></div>
<div class="t" style="left:284.4px;top:233.9px;font-size:7.85px;color:#384068;font-family:'Liberation Mono',monospace;">2675693.2410</div>
<div style="left:342.5px;top:228.3px;width:62.5px;height:11.5px;border-bottom:1px solid #d2d2d2;"></div>
<div class="t" style="left:346.2px;top:233.9px;font-size:7.85px;color:#3a3a3a;font-family:'Liberation Mono',monospace;">1245410</div>
<div style="left:420px;top:228.3px;width:52px;height:11.5px;border-right:1px solid #d8d8d8;border-bottom:1px solid #d6d6d6;"></div>
<div class="rh" style="left:118.2px;top:239.8px;width:28.4px;height:11.5px;"></div>
<div class="t" style="left:128.79px;top:245.8px;font-size:7.8px;color:#262626;transform:scaleX(0.82);">15</div>
<div style="left:146.6px;top:239.8px;width:56.4px;height:11.5px;border-right:1px solid #d2d2d2;border-bottom:1px solid #d2d2d2;"></div>
<div class="t" style="left:149.2px;top:245.6px;font-size:7.9px;color:#1a1a1a;font-weight:bold;font-family:'Liberation Mono',monospace;">14</div>
<div style="left:281.5px;top:239.8px;width:61.0px;height:11.5px;background:#adb6d8;"></div>
<div class="t" style="left:284.4px;top:245.4px;font-size:7.85px;color:#384068;font-family:'Liberation Mono',monospace;">2675693.3281</div>
<div style="left:342.5px;top:239.8px;width:62.5px;height:11.5px;border-bottom:1px solid #d2d2d2;"></div>
<div class="t" style="left:346.2px;top:245.4px;font-size:7.85px;color:#3a3a3a;font-family:'Liberation Mono',monospace;">1245412</div>
<div style="left:420px;top:239.8px;width:52px;height:11.5px;border-right:1px solid #d8d8d8;border-bottom:1px solid #d6d6d6;"></div>
<div class="rh" style="left:118.2px;top:251.3px;width:28.4px;height:11.5px;"></div>
<div class="t" style="left:128.79px;top:257.3px;font-size:7.8px;color:#262626;transform:scaleX(0.82);">16</div>
<div style="left:146.6px;top:251.3px;width:56.4px;height:11.5px;border-right:1px solid #d2d2d2;border-bottom:1px solid #d2d2d2;"></div>
<div class="t" style="left:149.2px;top:257.1px;font-size:7.9px;color:#1a1a1a;font-weight:bold;font-family:'Liberation Mono',monospace;">15</div>
<div style="left:281.5px;top:251.3px;width:61.0px;height:11.5px;background:#adb6d8;"></div>
<div class="t" style="left:284.4px;top:256.9px;font-size:7.85px;color:#384068;font-family:'Liberation Mono',monospace;">2675723.0691</div>
<div style="left:342.5px;top:251.3px;width:62.5px;height:11.5px;border-bottom:1px solid #d2d2d2;"></div>
<div class="t" style="left:346.2px;top:256.9px;font-size:7.85px;color:#3a3a3a;font-family:'Liberation Mono',monospace;">1245304</div>
<div style="left:420px;top:251.3px;width:52px;height:11.5px;border-right:1px solid #d8d8d8;border-bottom:1px solid #d6d6d6;"></div>
<div class="rh" style="left:118.2px;top:262.8px;width:28.4px;height:11.5px;"></div>
<div class="t" style="left:128.79px;top:268.8px;font-size:7.8px;color:#262626;transform:scaleX(0.82);">17</div>
<div style="left:146.6px;top:262.8px;width:56.4px;height:11.5px;border-right:1px solid #d2d2d2;border-bottom:1px solid #d2d2d2;"></div>
<div class="t" style="left:149.2px;top:268.6px;font-size:7.9px;color:#1a1a1a;font-weight:bold;font-family:'Liberation Mono',monospace;">16</div>
<div style="left:281.5px;top:262.8px;width:61.0px;height:11.5px;background:#adb6d8;"></div>
<div class="t" style="left:284.4px;top:268.4px;font-size:7.85px;color:#384068;font-family:'Liberation Mono',monospace;">2675724.2542</div>
<div style="left:342.5px;top:262.8px;width:62.5px;height:11.5px;border-bottom:1px solid #d2d2d2;"></div>
<div class="t" style="left:346.2px;top:268.4px;font-size:7.85px;color:#3a3a3a;font-family:'Liberation Mono',monospace;">1245308</div>
<div style="left:420px;top:262.8px;width:52px;height:11.5px;border-right:1px solid #d8d8d8;border-bottom:1px solid #d6d6d6;"></div>
<div class="rh" style="left:118.2px;top:274.3px;width:28.4px;height:11.5px;"></div>
<div class="t" style="left:128.79px;top:280.3px;font-size:7.8px;color:#262626;transform:scaleX(0.82);">18</div>
<div style="left:146.6px;top:274.3px;width:56.4px;height:11.5px;border-right:1px solid #d2d2d2;border-bottom:1px solid #d2d2d2;"></div>
<div class="t" style="left:149.2px;top:280.1px;font-size:7.9px;color:#1a1a1a;font-weight:bold;font-family:'Liberation Mono',monospace;">17</div>
<div style="left:281.5px;top:274.3px;width:61.0px;height:11.5px;background:#adb6d8;"></div>
<div class="t" style="left:284.4px;top:279.9px;font-size:7.85px;color:#384068;font-family:'Liberation Mono',monospace;">2675756.2545</div>
<div style="left:342.5px;top:274.3px;width:62.5px;height:11.5px;border-bottom:1px solid #d2d2d2;"></div>
<div class="t" style="left:346.2px;top:279.9px;font-size:7.85px;color:#3a3a3a;font-family:'Liberation Mono',monospace;">1245334</div>
<div style="left:420px;top:274.3px;width:52px;height:11.5px;border-right:1px solid #d8d8d8;border-bottom:1px solid #d6d6d6;"></div>
<div class="rh" style="left:118.2px;top:285.8px;width:28.4px;height:11.5px;"></div>
<div class="t" style="left:128.79px;top:291.8px;font-size:7.8px;color:#262626;transform:scaleX(0.82);">19</div>
<div style="left:146.6px;top:285.8px;width:56.4px;height:11.5px;border-right:1px solid #d2d2d2;border-bottom:1px solid #d2d2d2;"></div>
<div class="t" style="left:149.2px;top:291.6px;font-size:7.9px;color:#1a1a1a;font-weight:bold;font-family:'Liberation Mono',monospace;">18</div>
<div style="left:281.5px;top:285.8px;width:61.0px;height:11.5px;background:#adb6d8;"></div>
<div class="t" style="left:284.4px;top:291.4px;font-size:7.85px;color:#384068;font-family:'Liberation Mono',monospace;">2675753.7374</div>
<div style="left:342.5px;top:285.8px;width:62.5px;height:11.5px;border-bottom:1px solid #d2d2d2;"></div>
<div class="t" style="left:346.2px;top:291.4px;font-size:7.85px;color:#3a3a3a;font-family:'Liberation Mono',monospace;">1245337</div>
<div style="left:420px;top:285.8px;width:52px;height:11.5px;border-right:1px solid #d8d8d8;border-bottom:1px solid #d6d6d6;"></div>
<div class="rh" style="left:118.2px;top:297.3px;width:28.4px;height:11.5px;"></div>
<div class="t" style="left:128.79px;top:303.3px;font-size:7.8px;color:#262626;transform:scaleX(0.82);">20</div>
<div style="left:146.6px;top:297.3px;width:56.4px;height:11.5px;border-right:1px solid #d2d2d2;border-bottom:1px solid #d2d2d2;"></div>
<div class="t" style="left:149.2px;top:303.1px;font-size:7.9px;color:#1a1a1a;font-weight:bold;font-family:'Liberation Mono',monospace;">19</div>
<div style="left:281.5px;top:297.3px;width:61.0px;height:11.5px;background:#adb6d8;"></div>
<div class="t" style="left:284.4px;top:302.9px;font-size:7.85px;color:#384068;font-family:'Liberation Mono',monospace;">2675759.9269</div>
<div style="left:342.5px;top:297.3px;width:62.5px;height:11.5px;border-bottom:1px solid #d2d2d2;"></div>
<div class="t" style="left:346.2px;top:302.9px;font-size:7.85px;color:#3a3a3a;font-family:'Liberation Mono',monospace;">1245379.7090</div>
<div style="left:420px;top:297.3px;width:52px;height:11.5px;border-right:1px solid #d8d8d8;border-bottom:1px solid #d6d6d6;"></div>
<div class="rh" style="left:118.2px;top:308.8px;width:28.4px;height:11.5px;"></div>
<div class="t" style="left:128.79px;top:314.8px;font-size:7.8px;color:#262626;transform:scaleX(0.82);">21</div>
<div style="left:146.6px;top:308.8px;width:56.4px;height:11.5px;border-right:1px solid #d2d2d2;border-bottom:1px solid #d2d2d2;"></div>
<div class="t" style="left:149.2px;top:314.6px;font-size:7.9px;color:#1a1a1a;font-weight:bold;font-family:'Liberation Mono',monospace;">20</div>
<div style="left:281.5px;top:308.8px;width:61.0px;height:11.5px;background:#adb6d8;"></div>
<div class="t" style="left:284.4px;top:314.4px;font-size:7.85px;color:#384068;font-family:'Liberation Mono',monospace;">2675760.1189</div>
<div style="left:342.5px;top:308.8px;width:62.5px;height:11.5px;border-bottom:1px solid #d2d2d2;"></div>
<div class="t" style="left:346.2px;top:314.4px;font-size:7.85px;color:#3a3a3a;font-family:'Liberation Mono',monospace;">1245378.7736</div>
<div style="left:420px;top:308.8px;width:52px;height:11.5px;border-right:1px solid #d8d8d8;border-bottom:1px solid #d6d6d6;"></div>
<div class="rh" style="left:118.2px;top:320.3px;width:28.4px;height:11.5px;"></div>
<div class="t" style="left:128.79px;top:326.3px;font-size:7.8px;color:#262626;transform:scaleX(0.82);">22</div>
<div style="left:146.6px;top:320.3px;width:56.4px;height:11.5px;border-right:1px solid #d2d2d2;border-bottom:1px solid #d2d2d2;"></div>
<div class="t" style="left:149.2px;top:326.1px;font-size:7.9px;color:#1a1a1a;font-weight:bold;font-family:'Liberation Mono',monospace;">21</div>
<div style="left:281.5px;top:320.3px;width:61.0px;height:11.5px;background:#adb6d8;"></div>
<div class="t" style="left:284.4px;top:325.9px;font-size:7.85px;color:#384068;font-family:'Liberation Mono',monospace;">2675839.7420</div>
<div style="left:342.5px;top:320.3px;width:62.5px;height:11.5px;border-bottom:1px solid #d2d2d2;"></div>
<div class="t" style="left:346.2px;top:325.9px;font-size:7.85px;color:#3a3a3a;font-family:'Liberation Mono',monospace;">1245256.4981</div>
<div style="left:420px;top:320.3px;width:52px;height:11.5px;border-right:1px solid #d8d8d8;border-bottom:1px solid #d6d6d6;"></div>
<div class="rh" style="left:118.2px;top:331.8px;width:28.4px;height:11.5px;"></div>
<div class="t" style="left:128.79px;top:337.8px;font-size:7.8px;color:#262626;transform:scaleX(0.82);">23</div>
<div style="left:146.6px;top:331.8px;width:56.4px;height:11.5px;border-right:1px solid #d2d2d2;border-bottom:1px solid #d2d2d2;"></div>
<div class="t" style="left:149.2px;top:337.6px;font-size:7.9px;color:#1a1a1a;font-weight:bold;font-family:'Liberation Mono',monospace;">22</div>
<div style="left:281.5px;top:331.8px;width:61.0px;height:11.5px;background:#adb6d8;"></div>
<div class="t" style="left:284.4px;top:337.4px;font-size:7.85px;color:#384068;font-family:'Liberation Mono',monospace;">2675842.9350</div>
<div style="left:342.5px;top:331.8px;width:62.5px;height:11.5px;border-bottom:1px solid #d2d2d2;"></div>
<div class="t" style="left:346.2px;top:337.4px;font-size:7.85px;color:#3a3a3a;font-family:'Liberation Mono',monospace;">1245259.8301</div>
<div style="left:420px;top:331.8px;width:52px;height:11.5px;border-right:1px solid #d8d8d8;border-bottom:1px solid #d6d6d6;"></div>
<div class="rh" style="left:118.2px;top:343.3px;width:28.4px;height:11.5px;"></div>
<div class="t" style="left:128.79px;top:349.3px;font-size:7.8px;color:#262626;transform:scaleX(0.82);">24</div>
<div style="left:146.6px;top:343.3px;width:56.4px;height:11.5px;border-right:1px solid #d2d2d2;border-bottom:1px solid #d2d2d2;"></div>
<div class="t" style="left:149.2px;top:349.1px;font-size:7.9px;color:#1a1a1a;font-weight:bold;font-family:'Liberation Mono',monospace;">23</div>
<div style="left:281.5px;top:343.3px;width:61.0px;height:11.5px;background:#adb6d8;"></div>
<div class="t" style="left:284.4px;top:348.9px;font-size:7.85px;color:#384068;font-family:'Liberation Mono',monospace;">2675952.8420</div>
<div style="left:342.5px;top:343.3px;width:62.5px;height:11.5px;border-bottom:1px solid #d2d2d2;"></div>
<div class="t" style="left:346.2px;top:348.9px;font-size:7.85px;color:#3a3a3a;font-family:'Liberation Mono',monospace;">1245333.1314</div>
<div style="left:420px;top:343.3px;width:52px;height:11.5px;border-right:1px solid #d8d8d8;border-bottom:1px solid #d6d6d6;"></div>
<div class="rh" style="left:118.2px;top:354.8px;width:28.4px;height:11.5px;"></div>
<div class="t" style="left:128.79px;top:360.8px;font-size:7.8px;color:#262626;transform:scaleX(0.82);">25</div>
<div style="left:146.6px;top:354.8px;width:56.4px;height:11.5px;border-right:1px solid #d2d2d2;border-bottom:1px solid #d2d2d2;"></div>
<div class="t" style="left:149.2px;top:360.6px;font-size:7.9px;color:#1a1a1a;font-weight:bold;font-family:'Liberation Mono',monospace;">24</div>
<div style="left:281.5px;top:354.8px;width:61.0px;height:11.5px;background:#adb6d8;"></div>
<div class="t" style="left:284.4px;top:360.4px;font-size:7.85px;color:#384068;font-family:'Liberation Mono',monospace;">2675950.3250</div>
<div style="left:342.5px;top:354.8px;width:62.5px;height:11.5px;border-bottom:1px solid #d2d2d2;"></div>
<div class="t" style="left:346.2px;top:360.4px;font-size:7.85px;color:#3a3a3a;font-family:'Liberation Mono',monospace;">1245333.2465</div>
<div style="left:420px;top:354.8px;width:52px;height:11.5px;border-right:1px solid #d8d8d8;border-bottom:1px solid #d6d6d6;"></div>
<div class="rh" style="left:118.2px;top:366.3px;width:28.4px;height:11.5px;"></div>
<div class="t" style="left:128.79px;top:372.3px;font-size:7.8px;color:#262626;transform:scaleX(0.82);">26</div>
<div style="left:146.6px;top:366.3px;width:56.4px;height:11.5px;border-right:1px solid #d2d2d2;border-bottom:1px solid #d2d2d2;"></div>
<div class="t" style="left:149.2px;top:372.1px;font-size:7.9px;color:#1a1a1a;font-weight:bold;font-family:'Liberation Mono',monospace;">25</div>
<div style="left:281.5px;top:366.3px;width:61.0px;height:11.5px;background:#adb6d8;"></div>
<div class="t" style="left:284.4px;top:371.9px;font-size:7.85px;color:#384068;font-family:'Liberation Mono',monospace;">2675925.6781</div>
<div style="left:342.5px;top:366.3px;width:62.5px;height:11.5px;border-bottom:1px solid #d2d2d2;"></div>
<div class="t" style="left:346.2px;top:371.9px;font-size:7.85px;color:#3a3a3a;font-family:'Liberation Mono',monospace;">1245349.6196</div>
<div style="left:420px;top:366.3px;width:52px;height:11.5px;border-right:1px solid #d8d8d8;border-bottom:1px solid #d6d6d6;"></div>
<div class="rh" style="left:118.2px;top:377.8px;width:28.4px;height:11.5px;"></div>
<div class="t" style="left:128.79px;top:383.8px;font-size:7.8px;color:#262626;transform:scaleX(0.82);">27</div>
<div style="left:146.6px;top:377.8px;width:56.4px;height:11.5px;border-right:1px solid #d2d2d2;border-bottom:1px solid #d2d2d2;"></div>
<div class="t" style="left:149.2px;top:383.6px;font-size:7.9px;color:#1a1a1a;font-weight:bold;font-family:'Liberation Mono',monospace;">26</div>
<div style="left:281.5px;top:377.8px;width:61.0px;height:11.5px;background:#adb6d8;"></div>
<div class="t" style="left:284.4px;top:383.4px;font-size:7.85px;color:#384068;font-family:'Liberation Mono',monospace;">2675926.8210</div>
<div style="left:342.5px;top:377.8px;width:62.5px;height:11.5px;border-bottom:1px solid #d2d2d2;"></div>
<div class="t" style="left:346.2px;top:383.4px;font-size:7.85px;color:#3a3a3a;font-family:'Liberation Mono',monospace;">1245347.8026</div>
<div style="left:420px;top:377.8px;width:52px;height:11.5px;border-right:1px solid #d8d8d8;border-bottom:1px solid #d6d6d6;"></div>
<div class="rh" style="left:118.2px;top:389.3px;width:28.4px;height:11.5px;"></div>
<div class="t" style="left:128.79px;top:395.3px;font-size:7.8px;color:#262626;transform:scaleX(0.82);">28</div>
<div style="left:146.6px;top:389.3px;width:56.4px;height:11.5px;border-right:1px solid #d2d2d2;border-bottom:1px solid #d2d2d2;"></div>
<div class="t" style="left:149.2px;top:395.1px;font-size:7.9px;color:#1a1a1a;font-weight:bold;font-family:'Liberation Mono',monospace;">27</div>
<div style="left:281.5px;top:389.3px;width:61.0px;height:11.5px;background:#adb6d8;"></div>
<div class="t" style="left:284.4px;top:394.9px;font-size:7.85px;color:#384068;font-family:'Liberation Mono',monospace;">2675977.2335</div>
<div style="left:342.5px;top:389.3px;width:62.5px;height:11.5px;border-bottom:1px solid #d2d2d2;"></div>
<div class="t" style="left:346.2px;top:394.9px;font-size:7.85px;color:#3a3a3a;font-family:'Liberation Mono',monospace;">1245380.8473</div>
<div style="left:420px;top:389.3px;width:52px;height:11.5px;border-right:1px solid #d8d8d8;border-bottom:1px solid #d6d6d6;"></div>
<div class="rh" style="left:118.2px;top:400.8px;width:28.4px;height:11.5px;"></div>
<div class="t" style="left:128.79px;top:406.8px;font-size:7.8px;color:#262626;transform:scaleX(0.82);">29</div>
<div style="left:146.6px;top:400.8px;width:56.4px;height:11.5px;border-right:1px solid #d2d2d2;border-bottom:1px solid #d2d2d2;"></div>
<div class="t" style="left:149.2px;top:406.6px;font-size:7.9px;color:#1a1a1a;font-weight:bold;font-family:'Liberation Mono',monospace;">28</div>
<div style="left:281.5px;top:400.8px;width:61.0px;height:11.5px;background:#adb6d8;"></div>
<div class="t" style="left:284.4px;top:406.4px;font-size:7.85px;color:#384068;font-family:'Liberation Mono',monospace;">2675975.8515</div>
<div style="left:342.5px;top:400.8px;width:62.5px;height:11.5px;border-bottom:1px solid #d2d2d2;"></div>
<div class="t" style="left:346.2px;top:406.4px;font-size:7.85px;color:#3a3a3a;font-family:'Liberation Mono',monospace;">1245383.1693</div>
<div style="left:420px;top:400.8px;width:52px;height:11.5px;border-right:1px solid #d8d8d8;border-bottom:1px solid #d6d6d6;"></div>
<div class="rh" style="left:118.2px;top:412.3px;width:28.4px;height:11.5px;"></div>
<div class="t" style="left:128.79px;top:418.3px;font-size:7.8px;color:#262626;transform:scaleX(0.82);">30</div>
<div style="left:146.6px;top:412.3px;width:56.4px;height:11.5px;border-right:1px solid #d2d2d2;border-bottom:1px solid #d2d2d2;"></div>
<div class="t" style="left:149.2px;top:418.1px;font-size:7.9px;color:#1a1a1a;font-weight:bold;font-family:'Liberation Mono',monospace;">29</div>
<div style="left:281.5px;top:412.3px;width:61.0px;height:11.5px;background:#adb6d8;"></div>
<div class="t" style="left:284.4px;top:417.9px;font-size:7.85px;color:#384068;font-family:'Liberation Mono',monospace;">2675815.7185</div>
<div style="left:342.5px;top:412.3px;width:62.5px;height:11.5px;border-bottom:1px solid #d2d2d2;"></div>
<div class="t" style="left:346.2px;top:417.9px;font-size:7.85px;color:#3a3a3a;font-family:'Liberation Mono',monospace;">1245321.4043</div>
<div style="left:420px;top:412.3px;width:52px;height:11.5px;border-right:1px solid #d8d8d8;border-bottom:1px solid #d6d6d6;"></div>
<div class="rh" style="left:118.2px;top:423.8px;width:28.4px;height:11.5px;"></div>
<div class="t" style="left:128.79px;top:429.8px;font-size:7.8px;color:#262626;transform:scaleX(0.82);">31</div>
<div style="left:146.6px;top:423.8px;width:56.4px;height:11.5px;border-right:1px solid #d2d2d2;border-bottom:1px solid #d2d2d2;"></div>
<div class="t" style="left:149.2px;top:429.6px;font-size:7.9px;color:#1a1a1a;font-weight:bold;font-family:'Liberation Mono',monospace;">30</div>
<div style="left:281.5px;top:423.8px;width:61.0px;height:11.5px;background:#adb6d8;"></div>
<div class="t" style="left:284.4px;top:429.4px;font-size:7.85px;color:#384068;font-family:'Liberation Mono',monospace;">2675818.7835</div>
<div style="left:342.5px;top:423.8px;width:62.5px;height:11.5px;border-bottom:1px solid #d2d2d2;"></div>
<div class="t" style="left:346.2px;top:429.4px;font-size:7.85px;color:#3a3a3a;font-family:'Liberation Mono',monospace;">1245321.4052</div>
<div style="left:420px;top:423.8px;width:52px;height:11.5px;border-right:1px solid #d8d8d8;border-bottom:1px solid #d6d6d6;"></div>
<div class="rh" style="left:118.2px;top:435.3px;width:28.4px;height:11.5px;"></div>
<div class="t" style="left:128.79px;top:441.3px;font-size:7.8px;color:#262626;transform:scaleX(0.82);">32</div>
<div style="left:146.6px;top:435.3px;width:56.4px;height:11.5px;border-right:1px solid #d2d2d2;border-bottom:1px solid #d2d2d2;"></div>
<div class="t" style="left:149.2px;top:441.1px;font-size:7.9px;color:#1a1a1a;font-weight:bold;font-family:'Liberation Mono',monospace;">31</div>
<div style="left:281.5px;top:435.3px;width:61.0px;height:11.5px;background:#adb6d8;"></div>
<div class="t" style="left:284.4px;top:440.9px;font-size:7.85px;color:#384068;font-family:'Liberation Mono',monospace;">2675843.2519</div>
<div style="left:342.5px;top:435.3px;width:62.5px;height:11.5px;border-bottom:1px solid #d2d2d2;"></div>
<div class="t" style="left:346.2px;top:440.9px;font-size:7.85px;color:#3a3a3a;font-family:'Liberation Mono',monospace;">1245360.4011</div>
<div style="left:420px;top:435.3px;width:52px;height:11.5px;border-right:1px solid #d8d8d8;border-bottom:1px solid #d6d6d6;"></div>
<div style="left:281px;top:78.5px;width:62.2px;height:368.2px;border:1.6px solid #1c1e1c;border-left-width:2px;border-bottom:none;"></div>
<div style="left:787.8px;top:55.9px;width:9.4px;height:390.8px;background:#f3f7fa;"></div>
<div style="left:788px;top:56.3px;width:8.5px;height:8.3px;background:linear-gradient(#f6f5f1,#d8d6ce);border:1px solid #a8a69f;"></div>
<div style="left:790.2px;top:58.8px;width:4px;height:3px;"><svg width="4" height="3" viewBox="0 0 4 3"><path d="M0 2.6h4L2 0z" fill="#111"/></svg></div>
<div style="left:788px;top:64.6px;width:8.5px;height:4.9px;background:#dad8d1;border:1px solid #b6b4ad;"></div>
<div style="left:788px;top:436.7px;width:8.5px;height:8.3px;background:linear-gradient(#f6f5f1,#d8d6ce);border:1px solid #a8a69f;"></div>
<div style="left:790.2px;top:439.6px;width:4px;height:3px;"><svg width="4" height="3" viewBox="0 0 4 3"><path d="M0 0h4L2 2.6z" fill="#111"/></svg></div>
<div style="left:797.2px;top:12.6px;width:2.8px;height:561.4px;background:#c4c2bd;"></div>
<div style="left:797.2px;top:12.6px;width:1.0px;height:561.4px;background:#7e7c78;"></div>
<div style="left:118.2px;top:446.2px;width:669.6px;height:8.1px;background:#f1f3f5;"></div>
<div style="left:126.6px;top:446.3px;width:603.4px;height:8.1px;background:linear-gradient(#e2e0da,#d2d0ca);border-top:1px solid #fafaf8;border-right:1.2px solid #6a6864;border-bottom:1.2px solid #6a6864;"></div>
<div style="left:119.4px;top:446.3px;width:7.2px;height:7.1px;background:#f6f6f4;border-right:1px solid #5a5854;"></div>
<div style="left:121.3px;top:448.3px;width:3px;height:4px;"><svg width="3" height="4" viewBox="0 0 3 4"><path d="M2.4 0v4L0 2z" fill="#111"/></svg></div>
<div style="left:778.8px;top:445.6px;width:8.4px;height:8.2px;background:linear-gradient(#f8f7f4,#dedcd5);border:1px solid #9a9892;border-right-color:#5a5854;border-bottom-color:#5a5854;"></div>
<div style="left:781.8px;top:447.8px;width:3px;height:4px;"><svg width="3" height="4" viewBox="0 0 3 4"><path d="M0 0v4L2.4 2z" fill="#111"/></svg></div>
<div style="left:787.8px;top:446.2px;width:9.4px;height:8.1px;background:#dcdad4;"></div>
<div style="left:117.2px;top:454.4px;width:680.0px;height:12.6px;background:#d8d6d0;border-left:1px solid #7a7873;border-top:1px solid #f4f3f0;border-bottom:1px solid #8a8882;box-shadow:inset 0 -1px 0 #f0efec;"></div>
<div class="t" style="left:120.4px;top:461.8px;font-size:6.9px;color:#111;transform:scaleX(0.93);">D:\temp\10000.koo</div>
<div class="t" style="left:700.3px;top:461.8px;font-size:6.9px;color:#111;transform:scaleX(0.884);">PK</div>
<div style="left:729.4px;top:455.5px;width:1.0px;height:10.8px;background:#a8a6a0;"></div>
<div style="left:730.4px;top:455.5px;width:1.0px;height:10.8px;background:#f4f3f0;"></div>
<div style="left:788px;top:455.5px;width:1px;height:10.8px;background:#a8a6a0;"></div>
<div style="left:793px;top:457.5px;width:1px;height:1.0px;background:#9a9894;"></div>
<div style="left:793px;top:460px;width:1px;height:1px;background:#9a9894;"></div>
<div style="left:793px;top:462.5px;width:1px;height:1.0px;background:#9a9894;"></div>
<div style="left:793px;top:465px;width:1px;height:1px;background:#9a9894;"></div>
<div style="left:2px;top:467px;width:795.2px;height:92px;background:#d9d6d0;"></div>
<div class="t" style="left:5.5px;top:477.2px;font-size:7.1px;color:#111;transform:scaleX(0.884);">Warnungen und Fehler</div>
<div style="left:780px;top:473.4px;width:5px;height:6.5px;"><svg width="5" height="6.5" viewBox="0 0 5 6.5"><path d="M1 0.5h3v3.3h-3z" fill="#222"/><path d="M0 3.8h5M2.5 3.8v2.7" stroke="#222" stroke-width="0.9"/></svg></div>
<div style="left:789.5px;top:473.8px;width:5px;height:5px;"><svg width="5" height="5" viewBox="0 0 5 5"><path d="M0.4 0.4L4.6 4.6M4.6 0.4L0.4 4.6" stroke="#111" stroke-width="1.3"/></svg></div>
<div style="left:3px;top:480.6px;width:794.2px;height:13.7px;background:linear-gradient(#fbfbfa,#f1f0ec 60%,#dcdad3);"></div>
<div style="left:3.2px;top:481px;width:2.3px;height:13px;background:#f8f8f6;"></div>
<div style="left:6px;top:481px;width:38.2px;height:13px;background:linear-gradient(#ccd5ee,#b6c1e2);border:1px solid #7a88b4;"></div>
<div style="left:48px;top:481px;width:52.5px;height:13px;background:linear-gradient(#ccd5ee,#b6c1e2);border:1px solid #7a88b4;"></div>
<div style="left:104px;top:481px;width:60.3px;height:13px;background:linear-gradient(#ccd5ee,#b6c1e2);border:1px solid #7a88b4;"></div>
<div style="left:0px;top:0px;width:180px;height:500px;"><svg width="180" height="500" viewBox="0 0 180 500"><circle cx="11.8" cy="487.6" r="3.6" fill="#d8303a" stroke="#a01820" stroke-width="0.6"/><path d="M10.2 486l3.2 3.2M13.4 486l-3.2 3.2" stroke="#fff" stroke-width="0.9"/><path d="M54 484l4.2 7.2h-8.4z" fill="#f4d030" stroke="#b89010" stroke-width="0.6"/><path d="M54 486.5v2.5" stroke="#333" stroke-width="0.8"/><circle cx="110.6" cy="487.6" r="3.6" fill="#4a7ad0" stroke="#2a4a90" stroke-width="0.6"/><path d="M110.6 486v3.5" stroke="#fff" stroke-width="1"/></svg></div>
<div class="t" style="left:17px;top:487.7px;font-size:6.9px;color:#111;transform:scaleX(0.884);">0 Fehler</div>
<div class="t" style="left:60px;top:487.7px;font-size:6.9px;color:#111;transform:scaleX(0.884);">0 Warnungen</div>
<div class="t" style="left:116.3px;top:487.7px;font-size:6.9px;color:#111;transform:scaleX(0.884);">0 Informationen</div>
<div style="left:166.5px;top:481.6px;width:127.7px;height:12.0px;background:#f8f9fb;border:1px solid #e4e4e2;"></div>
<div class="t" style="left:170.2px;top:487.7px;font-size:6.9px;color:#111;transform:scaleX(0.884);">Meldungen von aktive Datei anzeigen</div>
<div style="left:288.3px;top:482.2px;width:5.7px;height:11.0px;background:linear-gradient(#eaeae6,#c8c6c0);"></div>
<div style="left:289.2px;top:486.6px;width:4px;height:3px;"><svg width="4" height="3" viewBox="0 0 4 3"><path d="M0 0h4l-2 2.5z" fill="#111"/></svg></div>
<div style="left:0px;top:0px;width:400px;height:500px;"><svg width="400" height="500" viewBox="0 0 400 500"><rect x="301" y="484" width="7" height="8" fill="#e6e6e6" stroke="#c8c8c8" stroke-width="0.6"/><rect x="316" y="484" width="7" height="8" fill="#e0e0e0" stroke="#c4c4c4" stroke-width="0.6"/><rect x="328" y="484" width="8" height="8" fill="#d0d0d0" stroke="#bbb" stroke-width="0.6"/><path d="M345 488h7M345 488l3-3M345 488l3 3M358 488h7M365 488l-3-3M365 488l-3 3" stroke="#c8c8c8" stroke-width="1.3"/></svg></div>
<div style="left:297px;top:483px;width:0.8px;height:9.5px;background:#d0cec8;"></div>
<div style="left:312.5px;top:483px;width:0.8px;height:9.5px;background:#d0cec8;"></div>
<div style="left:340.5px;top:483px;width:0.8px;height:9.5px;background:#d0cec8;"></div>
<div class="hdr" style="left:3px;top:495.3px;width:794.2px;height:12.2px;"></div>
<div style="left:19.8px;top:495.3px;width:1.0px;height:12.2px;background:#8a8882;"></div>
<div style="left:43.1px;top:495.3px;width:1.0px;height:12.2px;background:#8a8882;"></div>
<div style="left:157.2px;top:495.3px;width:1.0px;height:12.2px;background:#8a8882;"></div>
<div style="left:710.3px;top:495.3px;width:1.0px;height:12.2px;background:#8a8882;"></div>
<div style="left:745.3px;top:495.3px;width:1.0px;height:12.2px;background:#8a8882;"></div>
<div class="t" style="left:46.8px;top:502px;font-size:6.9px;color:#111;transform:scaleX(0.884);">Typ</div>
<div class="t" style="left:161px;top:502px;font-size:6.9px;color:#111;transform:scaleX(0.884);">Beschreibung</div>
<div class="t" style="left:729.7px;top:502px;font-size:6.9px;color:#111;transform:scaleX(0.884);">Linie</div>
<div style="left:3px;top:507.4px;width:794.2px;height:51.6px;background:#f3f7fa;"></div>
<div style="left:3px;top:517px;width:794.2px;height:0.9px;background:#e1e4e8;"></div>
<div style="left:3px;top:546.2px;width:794.2px;height:0.9px;background:#e1e4e8;"></div>
<div style="left:3px;top:556.6px;width:794.2px;height:0.9px;background:#e1e4e8;"></div>
<div style="left:158.3px;top:507.5px;width:0.8px;height:51.5px;background:#eaedf0;"></div>
<div style="left:534.6px;top:507.5px;width:0.8px;height:51.5px;background:#eaedf0;"></div>
<div style="left:626px;top:507.5px;width:0.8px;height:51.5px;background:#eaedf0;"></div>
<div style="left:711.4px;top:507.5px;width:0.8px;height:51.5px;background:#eaedf0;"></div>
<div style="left:2px;top:507.4px;width:1px;height:51.6px;background:#5e5c58;"></div>
<div style="left:2px;top:559px;width:795.2px;height:13.2px;background:#d9d6d0;"></div>
<div style="left:38.6px;top:558.6px;width:78.6px;height:13.0px;background:#f5f6f7;border:1px solid #9a9892;border-top:none;"></div>
<div style="left:0px;top:0px;width:60px;height:574px;"><svg width="60" height="574" viewBox="0 0 60 574"><circle cx="8.3" cy="565.3" r="3.2" fill="#e8eef6" stroke="#7a90b8" stroke-width="0.8"/><path d="M6.3 565.3h4M6.3 565.3l1.6-1.5" stroke="#3060a0" stroke-width="0.8" fill="none"/><path d="M43.7 561.6l3.6 6.6h-7.2z" fill="#f4d030" stroke="#b89010" stroke-width="0.6"/><path d="M43.7 564v2.2" stroke="#333" stroke-width="0.8"/></svg></div>
<div class="t" style="left:13.5px;top:565.6px;font-size:6.9px;color:#707070;transform:scaleX(0.884);">Verlauf</div>
<div class="t" style="left:50.2px;top:565.6px;font-size:6.9px;color:#111;transform:scaleX(0.884);">Warnungen und Fehler</div>
<div style="left:0px;top:572.2px;width:800px;height:1.8px;background:#8a8883;"></div>
<div style="left:377px;top:129px;width:220.5px;height:172.6px;background:#d6d3cc;border-top:1px solid #eeede8;border-left:1px solid #eeede8;border-right:1px solid #404040;border-bottom:1px solid #404040;box-shadow:inset -1px -1px 0 #8a8882;"></div>
<div style="left:378.2px;top:129.5px;width:218.1px;height:8.4px;background:linear-gradient(to right,#0a246a 0%,#0e2a6e 54%,#5470b2 59%,#7a94ca 66%,#a2bae2 72%,#b0c8ec 100%);"></div>
<div class="t" style="left:379.2px;top:133.9px;font-size:6.95px;color:#fff;font-weight:bold;">Spalte aktualisieren / Werte berechnen</div>
<div style="left:588.2px;top:130.6px;width:6.6px;height:6.3px;background:#d8d5ce;border-top:1px solid #fff;border-left:1px solid #fff;border-right:1px solid #404040;border-bottom:1px solid #404040;"></div>
<div style="left:589.9px;top:132.2px;width:4px;height:4px;"><svg width="4" height="4" viewBox="0 0 4 4"><path d="M0.4 0.4L3.6 3.6M3.6 0.4L0.4 3.6" stroke="#333" stroke-width="0.7"/></svg></div>
<div class="t" style="left:385px;top:147.6px;font-size:6.9px;color:#111;transform:scaleX(0.884);">Geben Sie einen Wert oder einen Term ein, um zu die (den) vorgewählte(n)</div>
<div class="t" style="left:385px;top:155.2px;font-size:6.9px;color:#111;transform:scaleX(0.884);">Spalte(n) zu beeinflussen.</div>
<div style="left:383px;top:162px;width:207px;height:114px;background:#f6f8fa;border-top:1px solid #807e78;border-left:1px solid #807e78;border-right:1px solid #f2f1ee;border-bottom:1px solid #f2f1ee;box-shadow:inset 1px 1px 0 #404040;"></div>
<div class="t" style="left:385px;top:168.3px;font-size:7.2px;color:#6f9e90;letter-spacing:1.1px;">[6]</div>
<div class="t" style="left:400.6px;top:168.3px;font-size:7.2px;color:#111;transform:scaleX(0.95);">-</div>
<div class="t" style="left:408.4px;top:168.3px;font-size:7.2px;color:#d04040;transform:scaleX(0.975);">2000000</div>
<div style="left:442px;top:281px;width:42.5px;height:13.5px;background:#d6d3cc;border:1px solid #111;box-shadow:inset 1px 1px 0 #fff,inset -1px -1px 0 #807e78;"></div>
<div class="t" style="left:458.84px;top:287.9px;font-size:6.9px;color:#111;transform:scaleX(0.884);">OK</div>
<div style="left:488px;top:281px;width:43px;height:13.5px;background:#d6d3cc;border-top:1px solid #fff;border-left:1px solid #fff;border-right:1px solid #404040;border-bottom:1px solid #404040;"></div>
<div class="t" style="left:494.5px;top:287.9px;font-size:6.9px;color:#111;transform:scaleX(0.884);">Abbrechen</div>
<div style="left:383.6px;top:175.7px;width:132.2px;height:94.2px;background:#f5f7f9;border:1px solid #8c8a85;box-shadow:1px 1px 1px rgba(0,0,0,0.25);"></div>
<div style="left:392px;top:176.7px;width:6.2px;height:92.2px;background:linear-gradient(to right,#eceae4,#e4e2dc 45%,#d2d0c8 55%,#d4d2ca 90%,#eef0f0);"></div>
<div style="left:384.3px;top:176.3px;width:130.7px;height:13.2px;background:#b9bed9;border:1px solid #4a5478;"></div>
<div class="t" style="left:403.8px;top:183.8px;font-size:6.9px;color:#111;transform:scaleX(0.884);">Spalten (Felder)</div>
<div style="left:506.3px;top:181.8px;width:3px;height:4px;"><svg width="3" height="4" viewBox="0 0 3 4"><path d="M0 0v4L2.4 2z" fill="#111"/></svg></div>
<div class="t" style="left:403.8px;top:196.55px;font-size:6.9px;color:#111;transform:scaleX(0.884);">Konstanten</div>
<div style="left:506.3px;top:194.55px;width:3px;height:4px;"><svg width="3" height="4" viewBox="0 0 3 4"><path d="M0 0v4L2.4 2z" fill="#111"/></svg></div>
<div class="t" style="left:403.8px;top:209.3px;font-size:6.9px;color:#111;transform:scaleX(0.884);">Variablen</div>
<div style="left:506.3px;top:207.3px;width:3px;height:4px;"><svg width="3" height="4" viewBox="0 0 3 4"><path d="M0 0v4L2.4 2z" fill="#111"/></svg></div>
<div class="t" style="left:403.8px;top:222.05px;font-size:6.9px;color:#111;transform:scaleX(0.884);">Funktionen</div>
<div style="left:506.3px;top:220.05px;width:3px;height:4px;"><svg width="3" height="4" viewBox="0 0 3 4"><path d="M0 0v4L2.4 2z" fill="#111"/></svg></div>
<div class="t" style="left:403.8px;top:234.8px;font-size:6.9px;color:#111;transform:scaleX(0.884);">Operatoren</div>
<div style="left:506.3px;top:232.8px;width:3px;height:4px;"><svg width="3" height="4" viewBox="0 0 3 4"><path d="M0 0v4L2.4 2z" fill="#111"/></svg></div>
<div class="t" style="left:403.8px;top:247.55px;font-size:6.9px;color:#111;transform:scaleX(0.884);">Referenz (Zelle auswählen)...</div>
<div style="left:402.5px;top:254.6px;width:111.5px;height:0.8px;background:#c4c2bc;"></div>
<div class="t" style="left:403.8px;top:263.2px;font-size:6.9px;color:#a8a8a8;transform:scaleX(0.884);">Letzte Terme</div>
<div style="left:515.5px;top:177.5px;width:183.5px;height:330.4px;background:#f5f7f9;border:1px solid #8c8a85;box-shadow:1px 1px 1px rgba(0,0,0,0.25);"></div>
<div style="left:522.8px;top:178.5px;width:6.4px;height:328.4px;background:linear-gradient(to right,#eceae4,#e4e2dc 45%,#d2d0c8 55%,#d4d2ca 90%,#eef0f0);"></div>
<div class="t" style="left:536px;top:185.1px;font-size:6.9px;color:#111;transform:scaleX(0.895);">1 - Punktname</div>
<div class="t" style="left:536px;top:197.76px;font-size:6.9px;color:#111;transform:scaleX(0.895);">2 - Typ</div>
<div class="t" style="left:536px;top:210.42px;font-size:6.9px;color:#111;transform:scaleX(0.895);">3 - Datum</div>
<div class="t" style="left:536px;top:223.08px;font-size:6.9px;color:#111;transform:scaleX(0.895);">4 - Ordnung</div>
<div class="t" style="left:536px;top:235.74px;font-size:6.9px;color:#111;transform:scaleX(0.895);">5 - Karte</div>
<div style="left:515.8px;top:241.1px;width:182.6px;height:12.8px;background:#b9bed9;border:1px solid #4a5478;"></div>
<div class="t" style="left:536px;top:248.4px;font-size:6.9px;color:#111;transform:scaleX(0.895);">6 - Ost [m]</div>
<div class="t" style="left:536px;top:261.06px;font-size:6.9px;color:#111;transform:scaleX(0.895);">7 - Nord [m]</div>
<div class="t" style="left:536px;top:273.72px;font-size:6.9px;color:#111;transform:scaleX(0.895);">8 - Herkunft Lage</div>
<div class="t" style="left:536px;top:286.38px;font-size:6.9px;color:#111;transform:scaleX(0.895);">9 - Höhe [m]</div>
<div class="t" style="left:536px;top:299.04px;font-size:6.9px;color:#111;transform:scaleX(0.895);">10 - Herkunft Höhe</div>
<div class="t" style="left:536px;top:311.7px;font-size:6.9px;color:#111;transform:scaleX(0.895);">11 - Code (Koordinaten)</div>
<div class="t" style="left:536px;top:324.36px;font-size:6.9px;color:#111;transform:scaleX(0.895);">12 - Geoidabstand [m]</div>
<div class="t" style="left:536px;top:337.02px;font-size:6.9px;color:#111;transform:scaleX(0.895);">13 - Herkunft Geoid</div>
<div class="t" style="left:536px;top:349.68px;font-size:6.9px;color:#111;transform:scaleX(0.895);">14 - Ellipsoid (Code)</div>
<div class="t" style="left:536px;top:362.34px;font-size:6.9px;color:#111;transform:scaleX(0.895);">15 - ETA [cc]</div>
<div class="t" style="left:536px;top:375.0px;font-size:6.9px;color:#111;transform:scaleX(0.895);">16 - XI [cc]</div>
<div class="t" style="left:536px;top:387.66px;font-size:6.9px;color:#111;transform:scaleX(0.895);">17 - Herkunft Lotabweichung (in Höhe H)</div>
<div class="t" style="left:536px;top:400.32px;font-size:6.9px;color:#111;transform:scaleX(0.895);">18 - ETA0 [cc]</div>
<div class="t" style="left:536px;top:412.98px;font-size:6.9px;color:#111;transform:scaleX(0.895);">19 - XI0 [cc]</div>
<div class="t" style="left:536px;top:425.64px;font-size:6.9px;color:#111;transform:scaleX(0.895);">20 - Herkunft Lotabweichung (auf Meereshöhe)</div>
<div class="t" style="left:536px;top:438.3px;font-size:6.9px;color:#111;transform:scaleX(0.895);">21 - Raumtri</div>
<div class="t" style="left:536px;top:450.96px;font-size:6.9px;color:#111;transform:scaleX(0.895);">22 - Fortlaufende Nummerierung (GPS-Software)</div>
<div class="t" style="left:536px;top:463.62px;font-size:6.9px;color:#111;transform:scaleX(0.895);">23 - Flag (GPS)</div>
<div class="t" style="left:536px;top:476.28px;font-size:6.9px;color:#111;transform:scaleX(0.895);">24 - Session (GPS)</div>
<div class="t" style="left:536px;top:488.94px;font-size:6.9px;color:#111;transform:scaleX(0.895);">25 - Zone</div>
<div class="t" style="left:536px;top:501.6px;font-size:6.9px;color:#111;transform:scaleX(0.895);">26 - Kommentar</div>
</body></html>
